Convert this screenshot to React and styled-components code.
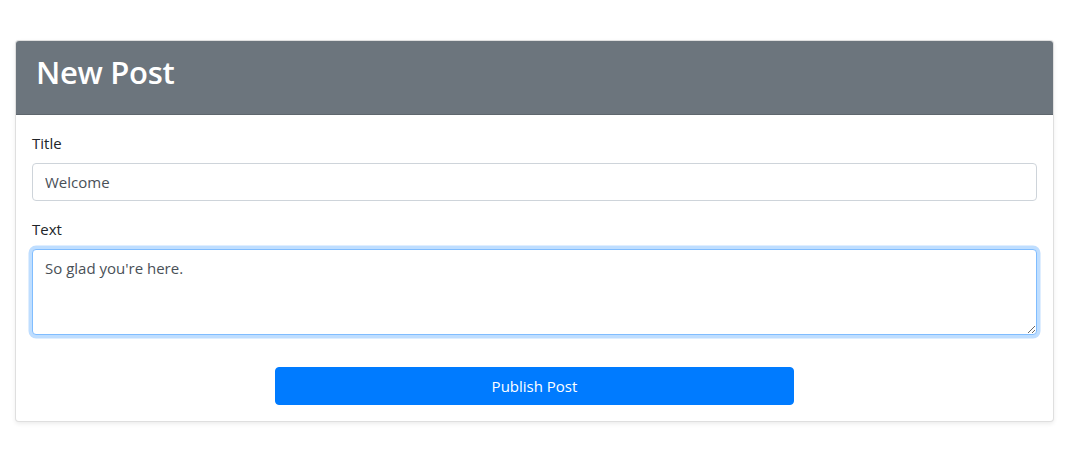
import React from "react";
import styled, { createGlobalStyle } from "styled-components";

const Global = createGlobalStyle`
  * { box-sizing: border-box; }
  html, body { margin: 0; padding: 0; background: #fff; }
  body {
    font-family: "Open Sans", "Noto Sans", Arial, sans-serif;
    font-size: 16px;
    line-height: 1.5;
    color: #212529;
  }
`;

const Page = styled.div`
  padding: 40px 20px 30px 15px;
`;

const Card = styled.div`
  border: 1px solid rgba(0, 0, 0, 0.125);
  border-radius: 4px;
  background: #fff;
  box-shadow: 0 2px 4px rgba(0, 0, 0, 0.075);
  overflow: hidden;
`;

const Header = styled.div`
  background: #6c757d;
  height: 74px;
  padding: 0 20px;
  display: flex;
  align-items: center;
  border-bottom: 1px solid rgba(0, 0, 0, 0.125);
`;

const Title = styled.h2`
  margin: 0 0 9px;
  color: #fff;
  font-size: 31px;
  font-weight: 600;
  line-height: 1.2;
  letter-spacing: -0.3px;
`;

const Body = styled.form`
  padding: 16px;
  display: flex;
  flex-direction: column;
`;

const Group = styled.div`
  display: flex;
  flex-direction: column;
  margin-bottom: 16px;
`;

const Label = styled.label`
  font-size: 15px;
  line-height: 24px;
  margin-bottom: 8px;
  color: #212529;
`;

const fieldBase = `
  display: block;
  width: 100%;
  padding: 6px 12px;
  font-family: inherit;
  font-size: 15px;
  line-height: 24px;
  color: #495057;
  background: #fff;
  border: 1px solid #ced4da;
  border-radius: 4px;
  outline: none;
`;

const Input = styled.input`
  ${fieldBase}
  height: 38px;
`;

const TextArea = styled.textarea`
  ${fieldBase}
  height: 86px;
  resize: vertical;
  border-color: ${(p) => (p.$focused ? "#80bdff" : "#ced4da")};
  box-shadow: ${(p) => (p.$focused ? "0 0 0 3.5px rgba(0, 123, 255, 0.25)" : "none")};
`;

const Actions = styled.div`
  display: flex;
  justify-content: center;
  padding-top: 16px;
`;

const Button = styled.button`
  width: 519px;
  height: 38px;
  border: 1px solid #007bff;
  border-radius: 4px;
  background: #007bff;
  color: #fff;
  font-family: inherit;
  font-size: 15px;
  line-height: 24px;
  cursor: pointer;
`;

export default function App() {
  return (
    <>
      <Global />
      <Page>
        <Card>
          <Header>
            <Title>New Post</Title>
          </Header>
          <Body onSubmit={(e) => e.preventDefault()}>
            <Group>
              <Label htmlFor="title">Title</Label>
              <Input id="title" defaultValue="Welcome" />
            </Group>
            <Group>
              <Label htmlFor="text">Text</Label>
              <TextArea id="text" rows={3} $focused defaultValue="So glad you're here." />
            </Group>
            <Actions>
              <Button type="submit">Publish Post</Button>
            </Actions>
          </Body>
        </Card>
      </Page>
    </>
  );
}
